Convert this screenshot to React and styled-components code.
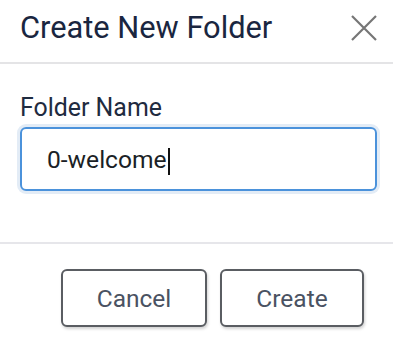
import React from "react";
import styled, { createGlobalStyle } from "styled-components";

const Global = createGlobalStyle`
  html, body { margin: 0; padding: 0; background: #fff; }
  body { font-family: Roboto, "Liberation Sans", Arial, sans-serif; }
  * { box-sizing: border-box; }
`;

const Dialog = styled.div`
  width: 393px;
  height: 340px;
  background: #fff;
  display: flex;
  flex-direction: column;
`;

const Header = styled.div`
  height: 64px;
  padding: 0 16px 6px 20px;
  display: flex;
  align-items: center;
  justify-content: space-between;
  border-bottom: 2px solid #e4e4e6;
`;

const Title = styled.h2`
  margin: 0;
  font-size: 30.8px;
  font-weight: 400;
  color: #1a2640;
  line-height: 36px;
`;

const CloseButton = styled.button`
  border: 0;
  background: none;
  padding: 0;
  width: 26px;
  height: 26px;
  display: flex;
  align-items: center;
  justify-content: center;
  cursor: pointer;
`;

const Body = styled.div`
  padding: 29px 16px 51px 20px;
  border-bottom: 2px solid #e6e6ea;
  display: flex;
  flex-direction: column;
  gap: 4px;
`;

const Label = styled.label`
  font-size: 24.9px;
  line-height: 30px;
  color: #1f2b40;
`;

const Field = styled.div`
  height: 64px;
  width: 357px;
  border: 2px solid #4b92db;
  border-radius: 6px;
  box-shadow: 0 0 0 3px #e3ecf6;
  display: flex;
  align-items: center;
  padding-left: 25px;
  font-size: 24.6px;
  color: #1b1f26;
`;

const Caret = styled.span`
  display: inline-block;
  width: 2px;
  height: 27px;
  margin-left: 1px;
  margin-top: 5px;
  background: #111;
`;

const Footer = styled.div`
  padding: 25px 29px 0 0;
  display: flex;
  justify-content: flex-end;
  gap: 13px;
`;

const Button = styled.button`
  width: ${(p) => p.$w}px;
  height: 58px;
  border: 2px solid #5a5d62;
  border-radius: 6px;
  background: #fff;
  box-shadow: 1px 2px 3px rgba(0, 0, 0, 0.18);
  font-family: Roboto, "Liberation Sans", Arial, sans-serif;
  font-size: 24.5px;
  color: #4a5262;
  cursor: pointer;
`;

export default function App() {
  return (
    <>
      <Global />
      <Dialog>
        <Header>
          <Title>Create New Folder</Title>
          <CloseButton aria-label="Close">
            <svg width="26" height="26" viewBox="0 0 26 26">
              <path d="M1 1 L25 25 M25 1 L1 25" stroke="#767676" strokeWidth="2.2" fill="none" />
            </svg>
          </CloseButton>
        </Header>
        <Body>
          <Label>Folder Name</Label>
          <Field>
            0-welcome
            <Caret />
          </Field>
        </Body>
        <Footer>
          <Button $w={146}>Cancel</Button>
          <Button $w={144}>Create</Button>
        </Footer>
      </Dialog>
    </>
  );
}
